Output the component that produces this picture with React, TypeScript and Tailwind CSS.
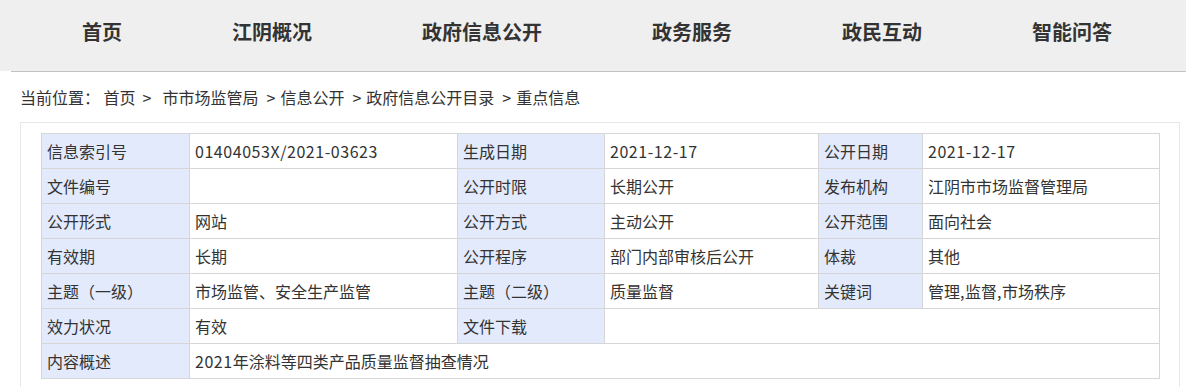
import React from 'react';

const navItems = ['首页', '江阴概况', '政府信息公开', '政务服务', '政民互动', '智能问答'];

const crumbs = ['首页', '市市场监管局', '信息公开', '政府信息公开目录', '重点信息'];

type Cell = { text: string; label?: boolean; span?: number };

const rows: Cell[][] = [
  [
    { text: '信息索引号', label: true },
    { text: '01404053X/2021-03623' },
    { text: '生成日期', label: true },
    { text: '2021-12-17' },
    { text: '公开日期', label: true },
    { text: '2021-12-17' },
  ],
  [
    { text: '文件编号', label: true },
    { text: '' },
    { text: '公开时限', label: true },
    { text: '长期公开' },
    { text: '发布机构', label: true },
    { text: '江阴市市场监督管理局' },
  ],
  [
    { text: '公开形式', label: true },
    { text: '网站' },
    { text: '公开方式', label: true },
    { text: '主动公开' },
    { text: '公开范围', label: true },
    { text: '面向社会' },
  ],
  [
    { text: '有效期', label: true },
    { text: '长期' },
    { text: '公开程序', label: true },
    { text: '部门内部审核后公开' },
    { text: '体裁', label: true },
    { text: '其他' },
  ],
  [
    { text: '主题（一级）', label: true },
    { text: '市场监管、安全生产监管' },
    { text: '主题（二级）', label: true },
    { text: '质量监督' },
    { text: '关键词', label: true },
    { text: '管理,监督,市场秩序' },
  ],
  [
    { text: '效力状况', label: true },
    { text: '有效' },
    { text: '文件下载', label: true },
    { text: '', span: 3 },
  ],
  [
    { text: '内容概述', label: true },
    { text: '2021年涂料等四类产品质量监督抽查情况', span: 5 },
  ],
];

const colWidths = ['w-[148px]', 'w-[268px]', 'w-[147px]', 'w-[214px]', 'w-[104px]', 'w-[237px]'];

// 数字和字母略宽一些，贴近雅黑的字宽
const renderText = (text: string) =>
  text.split(/([\x00-\x7F]+)/).map((part, i) =>
    /^[\x00-\x7F]+$/.test(part) ? (
      <span key={i} className="tracking-[0.55px]">
        {part}
      </span>
    ) : (
      part
    )
  );

export default function App() {
  return (
    <div className="min-h-screen bg-white text-[#333] font-['Microsoft_YaHei','Noto_Sans_CJK_SC',sans-serif]">
      {/* 顶部导航 */}
      <div className="w-[1186px] h-[71px] bg-[#efefef]">
        <ul className="flex gap-[110px] pl-[82px] pt-[17px]">
          {navItems.map((item) => (
            <li key={item} className="text-[20px] leading-[30px] font-bold text-[#333] whitespace-nowrap">
              {item}
            </li>
          ))}
        </ul>
      </div>
      <div className="ml-[11px] w-[1175px] h-px bg-[#c2c2c2]" />

      {/* 当前位置 */}
      <div className="h-[50px] pl-[20px] flex items-center text-[16px] text-[#333] whitespace-pre">
        <span>当前位置： </span>
        {crumbs.map((c, i) => (
          <React.Fragment key={c}>
            <span>{c}</span>
            {i < crumbs.length - 1 && (
              <span className={i === 0 ? 'ml-[7px] mr-[11px]' : 'ml-[8px] mr-[5px]'}>&gt;</span>
            )}
          </React.Fragment>
        ))}
      </div>

      {/* 信息表 */}
      <div className="ml-[20px] w-[1160px] border border-[#e6e6e6] pt-[10px] px-[20px] pb-[20px]">
        <table className="table-fixed border-collapse w-[1118px] text-[16px] text-[#333]">
          <colgroup>
            {colWidths.map((w, i) => (
              <col key={i} className={w} />
            ))}
          </colgroup>
          <tbody>
            {rows.map((row, r) => (
              <tr key={r} className="h-[35px]">
                {row.map((cell, c) => (
                  <td
                    key={c}
                    colSpan={cell.span}
                    className={`border border-[#d6d6d6] pl-[5px] py-0 whitespace-nowrap ${cell.label ? 'bg-[#e3eafc]' : 'bg-white'}`}
                  >
                    {renderText(cell.text)}
                  </td>
                ))}
              </tr>
            ))}
          </tbody>
        </table>
      </div>
    </div>
  );
}
